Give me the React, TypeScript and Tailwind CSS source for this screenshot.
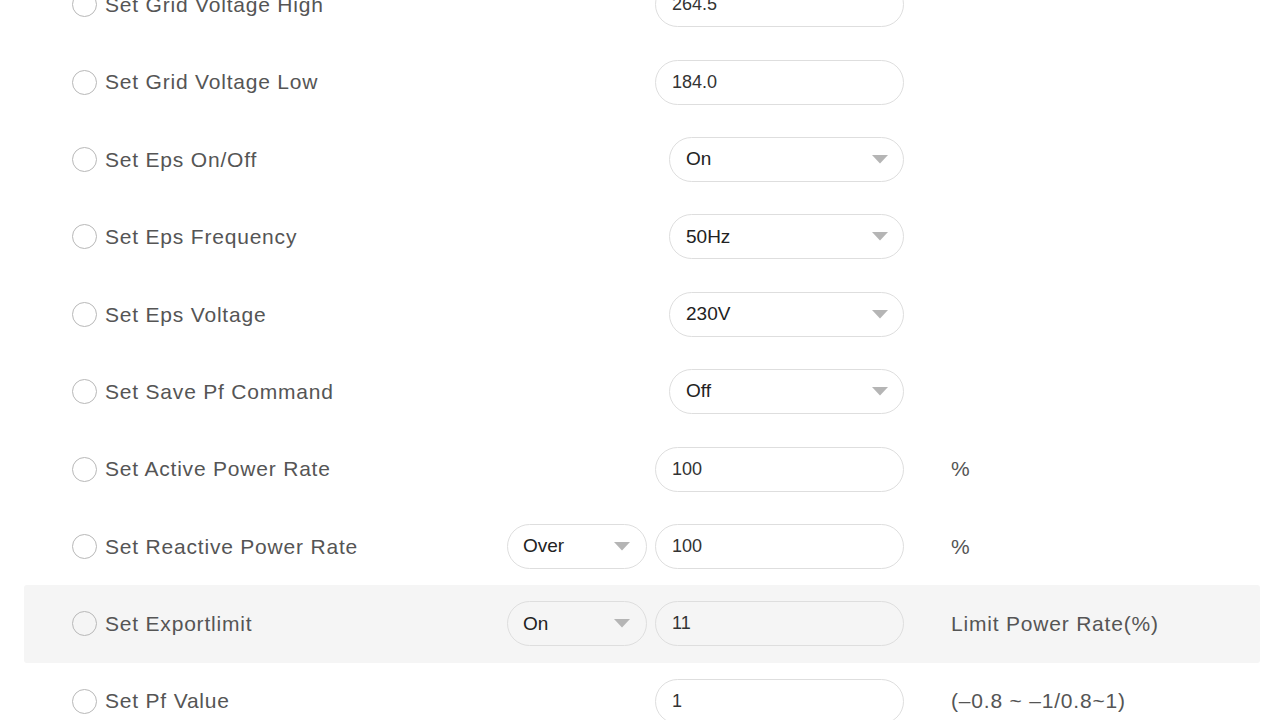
import React from "react";

type Row = {
  label: string;
  left?: string;
  input?: string;
  select?: string;
  unit?: string;
  hl?: boolean;
};

const rows: Row[] = [
  { label: "Set Grid Voltage High", input: "264.5" },
  { label: "Set Grid Voltage Low", input: "184.0" },
  { label: "Set Eps On/Off", select: "On" },
  { label: "Set Eps Frequency", select: "50Hz" },
  { label: "Set Eps Voltage", select: "230V" },
  { label: "Set Save Pf Command", select: "Off" },
  { label: "Set Active Power Rate", input: "100", unit: "%" },
  { label: "Set Reactive Power Rate", left: "Over", input: "100", unit: "%" },
  { label: "Set Exportlimit", left: "On", input: "11", unit: "Limit Power Rate(%)", hl: true },
  { label: "Set Pf Value", input: "1", unit: "(\u20130.8 ~ \u20131/0.8~1)" },
];

function Arrow() {
  return (
    <svg width="16" height="9" viewBox="0 0 16 9" className="shrink-0">
      <path d="M0 0 L16 0 L8 8.5 Z" fill="#b5b5b5" />
    </svg>
  );
}

export default function App() {
  return (
    <div
      className="w-[1280px] h-[720px] overflow-hidden bg-white"
      style={{ fontFamily: '"Liberation Sans", Arial, sans-serif' }}
    >
      <div className="mt-[-34px] ml-[24px] w-[1236px]">
        {rows.map((r, i) => (
          <div
            key={i}
            className={`h-[77.4px] flex items-center rounded-[3px] ${r.hl ? "bg-[#f5f5f5]" : ""}`}
          >
            <div className="w-[25px] h-[25px] rounded-full border-[1.5px] border-[#b8b8b8] ml-[48px] shrink-0" />
            <div className="ml-[8px] w-[402px] text-[21px] text-[#555] tracking-[0.8px]">{r.label}</div>
            <div className="w-[140px] shrink-0">
              {r.left && (
                <div className="h-[45px] rounded-full border border-[#dedede] flex items-center justify-between pl-[15px] pr-[16px] text-[19px] text-[#222]">
                  <span>{r.left}</span>
                  <Arrow />
                </div>
              )}
            </div>
            <div className="ml-[8px] w-[249px] shrink-0 flex justify-end">
              {r.input !== undefined && (
                <div className="w-[249px] h-[45px] rounded-full border border-[#dedede] flex items-center pl-[16px] text-[18px] text-[#333]">
                  {r.input}
                </div>
              )}
              {r.select && (
                <div className="w-[235px] h-[45px] rounded-full border border-[#dedede] flex items-center justify-between pl-[16px] pr-[15px] text-[19px] text-[#222]">
                  <span>{r.select}</span>
                  <Arrow />
                </div>
              )}
            </div>
            {r.unit && (
              <div className="ml-[47px] text-[21px] text-[#555] tracking-[0.8px]">{r.unit}</div>
            )}
          </div>
        ))}
      </div>
    </div>
  );
}
